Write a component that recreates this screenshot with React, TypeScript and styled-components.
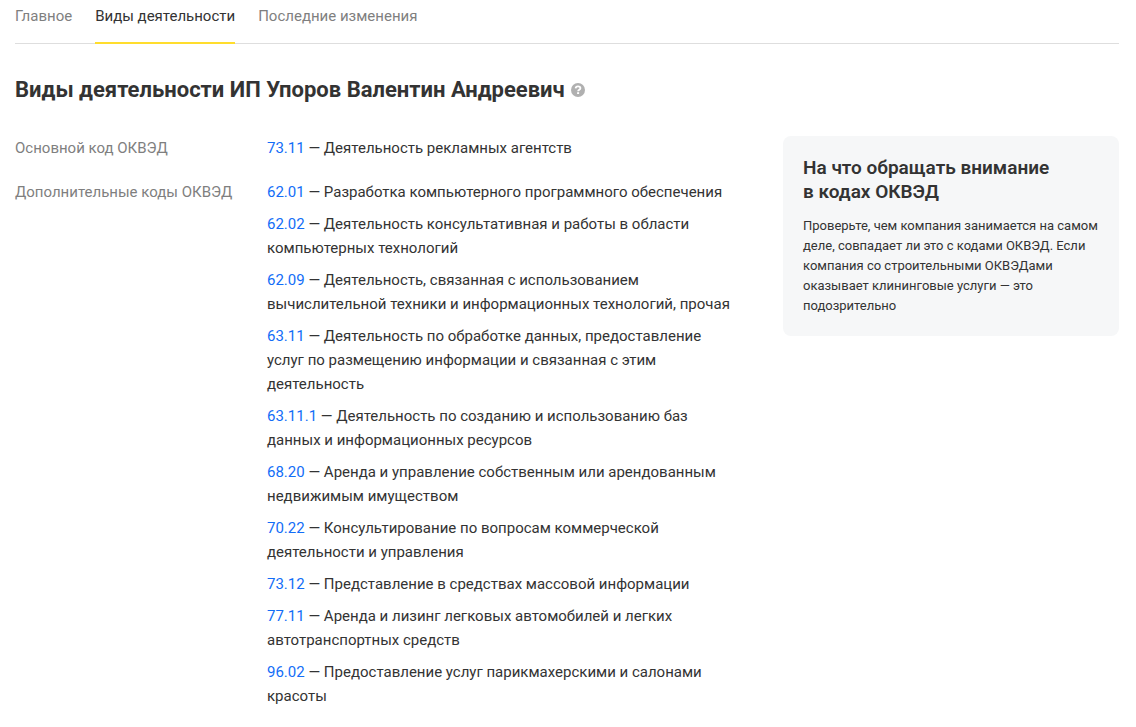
import React from 'react';
import styled, { createGlobalStyle } from 'styled-components';

const GlobalStyle = createGlobalStyle`
  * { box-sizing: border-box; }
  body {
    margin: 0;
    background: #fff;
    color: #333;
    font-family: Roboto, "Liberation Sans", sans-serif;
    font-size: 15px;
    line-height: 24px;
  }
`;

const Page = styled.div`
  padding: 4px 17px 16px 15px;
`;

const Tabs = styled.nav`
  display: flex;
  gap: 23px;
  box-shadow: inset 0 -1px 0 #dedede;
`;

const Tab = styled.a<{ $active?: boolean }>`
  height: 40px;
  color: ${(p) => (p.$active ? '#333' : '#7f7f7f')};
  text-decoration: none;
  white-space: nowrap;
  border-bottom: 2px solid ${(p) => (p.$active ? '#ffdd2d' : 'transparent')};
`;

const Heading = styled.div`
  display: flex;
  align-items: center;
  gap: 6px;
  margin: 30px 0;
`;

const Title = styled.h1`
  margin: 0;
  font-size: 22px;
  line-height: 32px;
  font-weight: 700;
`;

const HelpButton = styled.button`
  display: flex;
  padding: 0;
  border: 0;
  background: none;
  cursor: pointer;
`;

const Content = styled.div`
  display: grid;
  grid-template-columns: minmax(0, 1fr) 336px;
  gap: 48px;
  align-items: start;
`;

const Details = styled.dl`
  display: grid;
  grid-template-columns: 252px minmax(0, 1fr);
  row-gap: 20px;
  margin: 0;
`;

const Label = styled.dt`
  color: #7f7f7f;
`;

const Value = styled.dd`
  margin: 0;
`;

const CodeList = styled.ul`
  display: grid;
  gap: 8px;
  margin: 0;
  padding: 0;
  list-style: none;
`;

const CodeLink = styled.a`
  color: #126df7;
  text-decoration: none;
`;

const Hint = styled.aside`
  padding: 20px;
  border-radius: 8px;
  background: #f6f7f8;
`;

const HintTitle = styled.h2`
  margin: 0 0 12px;
  font-size: 19px;
  line-height: 24px;
  font-weight: 600;
`;

const HintText = styled.p`
  margin: 0;
  font-size: 13px;
  line-height: 20px;
`;

type Activity = { code: string; name: string };

const mainActivity: Activity = { code: '73.11', name: 'Деятельность рекламных агентств' };

const extraActivities: Activity[] = [
  { code: '62.01', name: 'Разработка компьютерного программного обеспечения' },
  { code: '62.02', name: 'Деятельность консультативная и работы в области компьютерных технологий' },
  { code: '62.09', name: 'Деятельность, связанная с использованием вычислительной техники и информационных технологий, прочая' },
  { code: '63.11', name: 'Деятельность по обработке данных, предоставление услуг по размещению информации и связанная с этим деятельность' },
  { code: '63.11.1', name: 'Деятельность по созданию и использованию баз данных и информационных ресурсов' },
  { code: '68.20', name: 'Аренда и управление собственным или арендованным недвижимым имуществом' },
  { code: '70.22', name: 'Консультирование по вопросам коммерческой деятельности и управления' },
  { code: '73.12', name: 'Представление в средствах массовой информации' },
  { code: '77.11', name: 'Аренда и лизинг легковых автомобилей и легких автотранспортных средств' },
  { code: '96.02', name: 'Предоставление услуг парикмахерскими и салонами красоты' },
];

const ActivityText = ({ code, name }: Activity) => (
  <>
    <CodeLink href={`#${code}`}>{code}</CodeLink> — {name}
  </>
);

const HelpIcon = () => (
  <svg width="14" height="14" viewBox="0 0 14 14" aria-hidden="true">
    <circle cx="7" cy="7" r="7" fill="#b0b0b0" />
    <path d="M4.6 5.4C4.7 4 5.7 3.3 7 3.3s2.4.7 2.4 1.9c0 1.5-2.3 1.5-2.3 3.1" fill="none" stroke="#fff" strokeWidth="1.8" />
    <rect x="6.1" y="9.2" width="2" height="1.8" fill="#fff" />
  </svg>
);

export default function App() {
  return (
    <>
      <GlobalStyle />
      <Page>
        <Tabs>
          <Tab href="#main">Главное</Tab>
          <Tab href="#activities" $active aria-current="page">Виды деятельности</Tab>
          <Tab href="#changes">Последние изменения</Tab>
        </Tabs>
        <main>
          <Heading>
            <Title>Виды деятельности ИП Упоров Валентин Андреевич</Title>
            <HelpButton type="button" aria-label="Справка">
              <HelpIcon />
            </HelpButton>
          </Heading>
          <Content>
            <Details>
              <Label>Основной код ОКВЭД</Label>
              <Value>
                <ActivityText {...mainActivity} />
              </Value>
              <Label>Дополнительные коды ОКВЭД</Label>
              <Value>
                <CodeList>
                  {extraActivities.map((activity) => (
                    <li key={activity.code}>
                      <ActivityText {...activity} />
                    </li>
                  ))}
                </CodeList>
              </Value>
            </Details>
            <Hint>
              <HintTitle>На что обращать внимание в&nbsp;кодах ОКВЭД</HintTitle>
              <HintText>
                Проверьте, чем компания занимается на самом деле, совпадает ли это с кодами ОКВЭД. Если компания со
                строительными ОКВЭДами оказывает клининговые услуги — это подозрительно
              </HintText>
            </Hint>
          </Content>
        </main>
      </Page>
    </>
  );
}
